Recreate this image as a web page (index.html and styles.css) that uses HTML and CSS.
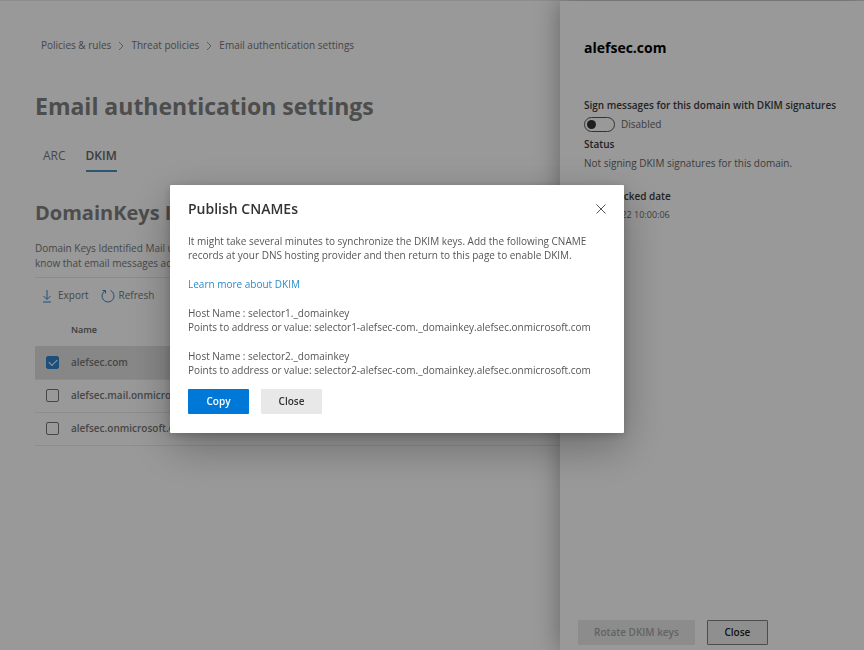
FILE: index.html
```html
<!DOCTYPE html>
<html lang="en">
<head>
<meta charset="utf-8">
<title>Email authentication settings</title>
<link rel="stylesheet" href="styles.css">
</head>
<body>
<div class="app">
  <main class="page">
    <nav class="crumbs" aria-label="Breadcrumb">
      <a href="#">Policies &amp; rules</a>
      <svg class="chevron" viewBox="0 0 6 10"><path d="M1 1l4 4-4 4"/></svg>
      <a href="#">Threat policies</a>
      <svg class="chevron" viewBox="0 0 6 10"><path d="M1 1l4 4-4 4"/></svg>
      <a href="#">Email authentication settings</a>
    </nav>
    <h1 class="page-title">Email authentication settings</h1>
    <div class="tabs" role="tablist">
      <button class="tab" role="tab">ARC</button>
      <button class="tab tab-active" role="tab" aria-selected="true">DKIM</button>
    </div>
    <h2 class="section-title">DomainKeys Identified Mail</h2>
    <p class="intro">Domain Keys Identified Mail uses<br>know that email messages actually</p>
    <div class="toolbar">
      <button class="tool">
        <svg class="tool-icon" viewBox="0 0 14 14"><path d="M7 1v9M3.500 7L7 10.500 10.500 7M3 13h8"/></svg>Export</button>
      <button class="tool">
        <svg class="tool-icon" viewBox="0 0 14 14"><path d="M4 1.800A6 6 0 1 0 9.500 1.500M1.500 1.500H4.500V4.500"/></svg>Refresh</button>
    </div>
    <table class="domains">
      <thead>
        <tr><th class="pick"></th><th scope="col">Name</th></tr>
      </thead>
      <tbody>
        <tr class="selected">
          <td class="pick"><input class="check" type="checkbox" id="d1" checked></td>
          <td><label for="d1">alefsec.com</label></td>
        </tr>
        <tr>
          <td class="pick"><input class="check" type="checkbox" id="d2"></td>
          <td><label for="d2">alefsec.mail.onmicrosoft.com</label></td>
        </tr>
        <tr>
          <td class="pick"><input class="check" type="checkbox" id="d3"></td>
          <td><label for="d3">alefsec.onmicrosoft.com</label></td>
        </tr>
      </tbody>
    </table>
  </main>

  <aside class="panel">
    <h2 class="panel-title">alefsec.com</h2>
    <label class="panel-label" for="sign">Sign messages for this domain with DKIM signatures</label>
    <div class="switch-row">
      <input class="switch" type="checkbox" role="switch" id="sign">
      <span>Disabled</span>
    </div>
    <h3 class="panel-label">Status</h3>
    <p class="panel-text">Not signing DKIM signatures for this domain.</p>
    <h3 class="panel-label checked-label">Last checked date</h3>
    <p class="panel-date">11/11/2022 10:00:06</p>
    <footer class="panel-actions">
      <button class="btn btn-muted" disabled>Rotate DKIM keys</button>
      <button class="btn btn-outline">Close</button>
    </footer>
  </aside>
</div>

<div class="overlay">
  <section class="dialog" role="dialog" aria-modal="true" aria-labelledby="dialog-title">
    <header class="dialog-head">
      <h2 class="dialog-title" id="dialog-title">Publish CNAMEs</h2>
      <button class="dismiss" aria-label="Dismiss">
        <svg viewBox="0 0 10 10"><path d="M.5.5l9 9M9.500.5l-9 9"/></svg>
      </button>
    </header>
    <div class="dialog-body">
      <p>It might take several minutes to synchronize the DKIM keys. Add the following CNAME<br>records at your DNS hosting provider and then return to this page to enable DKIM.</p>
      <p><a class="link" href="#">Learn more about DKIM</a></p>
      <p>Host Name : selector1._domainkey<br>Points to address or value: selector1-alefsec-com._domainkey.alefsec.onmicrosoft.com</p>
      <p>Host Name : selector2._domainkey<br>Points to address or value: selector2-alefsec-com._domainkey.alefsec.onmicrosoft.com</p>
    </div>
    <footer class="dialog-actions">
      <button class="btn btn-primary">Copy</button>
      <button class="btn btn-plain">Close</button>
    </footer>
  </section>
</div>
</body>
</html>
```
FILE: styles.css
```css
* { box-sizing: border-box; }

body {
  margin: 0;
  background: #fff;
  color: #777;
  font: 10px/15px "Open Sans", "Noto Sans", sans-serif;
  overflow: hidden;
}

h1, h2, h3, p { margin: 0; }

button {
  border: 0;
  padding: 0;
  background: none;
  color: inherit;
  font: inherit;
}

svg { fill: none; stroke: currentColor; }

.app {
  display: grid;
  grid-template-columns: minmax(0, 1fr) 304px;
  min-height: 100vh;
  border-top: 1px solid #ececec;
}

.page {
  padding: 37px 0 0 35px;
  white-space: nowrap;
  overflow: hidden;
}

.crumbs {
  display: flex;
  align-items: center;
  gap: 7px;
  padding-left: 6px;
}

.crumbs a { color: #757575; text-decoration: none; }

.chevron { width: 6px; height: 10px; color: #999; }

.page-title {
  margin-top: 35px;
  color: #808080;
  font-size: 23px;
  line-height: 36px;
}

.tabs { display: flex; gap: 20px; margin-top: 23px; padding-left: 8px; }

.tab { padding-bottom: 5px; border-bottom: 2px solid transparent; font-size: 12px; line-height: 18px; }

.tab-active { border-color: #4d90c0; color: #666; font-weight: 600; }

.section-title {
  margin-top: 27px;
  color: #808080;
  font-size: 20px;
  line-height: 28px;
}

.intro { margin-top: 14px; padding-bottom: 6px; border-bottom: 1px solid #e8e8e8; }

.toolbar { display: flex; gap: 12px; height: 35px; padding-left: 5px; }

.tool { display: flex; align-items: center; gap: 4px; }

.tool-icon { width: 14px; height: 14px; color: #3b82c4; }

.domains { width: 100%; border-collapse: collapse; text-align: left; }

.domains th { height: 33px; padding: 0; font-size: 9px; font-weight: 600; color: #666; }

.domains td { height: 33px; padding: 0; border-bottom: 1px solid #ebebeb; font-weight: 600; }

.domains .pick { width: 36px; padding-left: 11px; }

.selected { background: #e2e2e2; }

.check {
  display: block;
  width: 13px;
  height: 13px;
  margin: 0;
  appearance: none;
  border: 1px solid #777;
  border-radius: 2px;
}

.check:checked {
  border-color: #2f86cc;
  background: #2f86cc;
}

.check:checked::before {
  content: "";
  display: block;
  width: 7px;
  height: 4px;
  margin: 2px;
  border: solid #fff;
  border-width: 0 0 1px 1px;
  transform: rotate(-45deg);
}

.panel {
  display: flex;
  flex-direction: column;
  align-items: flex-start;
  padding: 37px 24px 5px;
  background: #fff;
  color: #666;
  box-shadow: 0 0 24px rgba(0, 0, 0, .35);
  white-space: nowrap;
}

.panel-title { color: #000; font-size: 14px; line-height: 20px; }

.panel-label { color: #3a3a3a; font-size: 10px; font-weight: 600; line-height: 18px; }

.panel-title + .panel-label { margin-top: 38px; }

.switch-row { display: flex; align-items: center; gap: 6px; height: 21px; }

.switch {
  width: 31px;
  height: 15px;
  margin: 0;
  padding: 2px;
  appearance: none;
  border: 1px solid #555;
  border-radius: 8px;
}

.switch::before {
  content: "";
  display: block;
  width: 9px;
  height: 9px;
  border-radius: 50%;
  background: #333;
}

.panel-text { line-height: 20px; }

.checked-label { margin-top: 14px; }

.panel-date { font-size: 9px; line-height: 20px; }

.panel-actions { display: flex; gap: 12px; margin: auto 0 0 -6px; }

.btn {
  min-width: 61px;
  height: 25px;
  padding: 0 16px;
  border-radius: 1px;
  font-weight: 600;
}

.btn-muted { background: #e9e9e9; color: #a5a5a5; }

.btn-outline { border: 1px solid #808080; background: #efefef; color: #222; }

.btn-plain { background: #e8e8e8; color: #333; }

.btn-primary { background: #0078d7; color: #fff; }

.overlay {
  position: fixed;
  inset: 0;
  display: flex;
  align-items: flex-start;
  padding: 185px 0 0 170px;
  background: rgba(0, 0, 0, .4);
}

.dialog {
  flex: 0 1 454px;
  padding: 14px 18px 19px;
  border-radius: 1px;
  background: #fff;
  color: #555;
  box-shadow: 0 14px 44px rgba(0, 0, 0, .3), 0 2px 8px rgba(0, 0, 0, .2);
  white-space: nowrap;
}

.dialog-head { display: flex; align-items: center; justify-content: space-between; }

.dialog-title { color: #333; font-size: 14px; font-weight: 600; line-height: 20px; }

.dismiss { width: 10px; height: 10px; color: #555; }

.dismiss svg { display: block; }

.dialog-body { margin-top: 7px; line-height: 14px; }

.dialog-body p { padding: 8px 0 7px; }

.link { color: #2a8dcb; text-decoration: none; }

.dialog-actions { display: flex; gap: 12px; margin-top: 5px; }
```
